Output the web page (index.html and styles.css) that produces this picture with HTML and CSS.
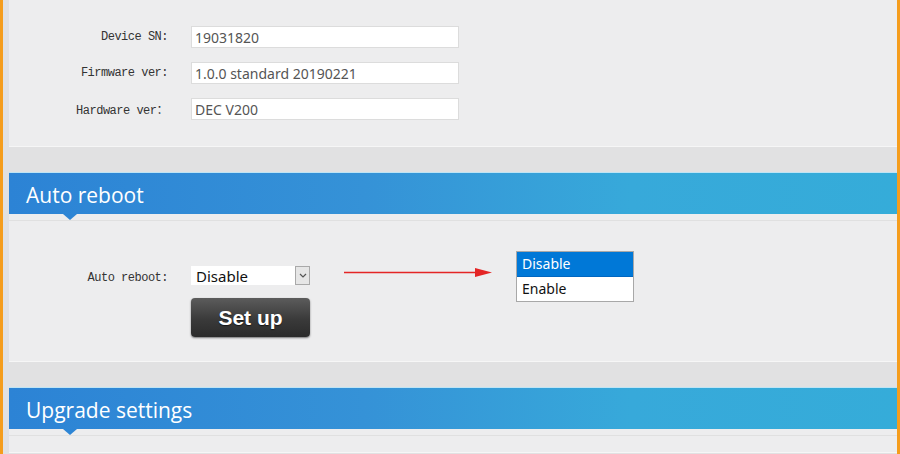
FILE: index.html
```html
<!DOCTYPE html>
<html lang="en">
<head>
  <meta charset="UTF-8" />
  <meta name="viewport" content="width=device-width, initial-scale=1.0"/>
  <title>System Settings</title>
  <link rel="stylesheet" href="styles.css">
</head>
<body>

  <div class="page">

    <div class="panel info">
      <div class="row">
        <label>Device SN:</label>
        <div class="field">19031820</div>
      </div>
      <div class="row">
        <label>Firmware ver:</label>
        <div class="field">1.0.0 standard 20190221</div>
      </div>
      <div class="row">
        <label>Hardware ver：</label>
        <div class="field">DEC V200</div>
      </div>
    </div>

    <div class="section">
      <div class="section-title"><h2>Auto reboot</h2></div>
      <div class="section-body reboot">
        <div class="row">
          <label>Auto reboot:</label>
          <div class="select">
            <span>Disable</span>
            <div class="select-btn">
              <svg width="8" height="5" viewBox="0 0 8 5"><path d="M1 1 L4 4 L7 1" fill="none" stroke="#555" stroke-width="1.2"/></svg>
            </div>
          </div>
        </div>
        <div class="row">
          <label></label>
          <button class="btn-setup">Set up</button>
        </div>

        <svg class="hint-arrow" width="150" height="11" viewBox="0 0 150 11">
          <line x1="0" y1="5.5" x2="134" y2="5.5" stroke="#e42525" stroke-width="1.6"/>
          <polygon points="131,1 148,5.5 131,10" fill="#e42525"/>
        </svg>

        <ul class="dropdown">
          <li class="active">Disable</li>
          <li>Enable</li>
        </ul>
      </div>
    </div>

    <div class="section">
      <div class="section-title"><h2>Upgrade settings</h2></div>
      <div class="section-body upgrade"></div>
    </div>

  </div>

</body>
</html>
```

FILE: styles.css
```css
body {
  margin: 0;
  background: #e1e1e2;
  border-left: 3px solid #f59d1c;
  border-right: 3px solid #f59d1c;
  height: 454px;
  overflow: hidden;
  color: #333;
}
.page {
  padding-left: 6px;
}
.panel, .section {
  background-color: #ededee;
  border-bottom: 1px solid #f6f6f6;
}
.info {
  padding: 26px 0 26px;
  display: flex;
  flex-direction: column;
  gap: 14px;
}
.row {
  display: grid;
  grid-template-columns: 159px 268px;
  column-gap: 23px;
  align-items: center;
}
.row label {
  text-align: right;
  font-family: "Liberation Mono", "Noto Sans CJK SC", monospace;
  font-size: 12px;
  letter-spacing: -0.5px;
  color: #333;
}
.field {
  height: 22px;
  box-sizing: border-box;
  background: white;
  border: 1px solid #dcdcdc;
  padding-left: 3px;
  font-family: "Noto Sans", sans-serif;
  font-size: 14px;
  line-height: 21px;
  color: #555;
}
.section {
  margin-top: 25px;
}
.section-title {
  position: relative;
  height: 41px;
  border-top: 1px solid #bfe4f4;
  background: linear-gradient(to right, #2c83d5, #3592d7 40%, #37a9da 70%, #35acd9);
}
.section-title::after {
  content: "";
  position: absolute;
  left: 54px;
  bottom: -6px;
  border-left: 7px solid transparent;
  border-right: 7px solid transparent;
  border-top: 6px solid #2d85d5;
}
.section-title h2 {
  margin: 0;
  padding: 2px 0 0 17px;
  font-family: "Open Sans", "Noto Sans", sans-serif;
  font-weight: normal;
  font-size: 21px;
  line-height: 40px;
  color: white;
}
.section-body {
  margin-top: 6px;
  border-top: 1px solid #e0e0e0;
}
.reboot {
  position: relative;
  padding: 45px 0 24px;
  display: flex;
  flex-direction: column;
  gap: 13px;
}
.reboot .row label {
  padding-top: 5px;
}
.select {
  width: 119px;
  height: 19px;
  box-sizing: border-box;
  background: white;
  display: flex;
  justify-content: space-between;
  font-family: "Noto Sans", sans-serif;
  font-size: 15px;
  line-height: 21px;
  color: #111;
}
.select span {
  padding-left: 5px;
}
.select-btn {
  width: 15px;
  height: 19px;
  box-sizing: border-box;
  background: #e6e6e6;
  border: 1px solid #a9a9a9;
  display: flex;
  align-items: center;
  justify-content: center;
}
.btn-setup {
  width: 119px;
  height: 39px;
  border: none;
  border-radius: 4px;
  background: linear-gradient(#5c5c5c, #3a3a3a 55%, #2b2b2b);
  box-shadow: 0 1px 2px rgba(0,0,0,0.5);
  color: white;
  font-family: "Liberation Sans", Arial, sans-serif;
  font-weight: bold;
  font-size: 21px;
  text-shadow: 0 1px 1px rgba(0,0,0,0.6);
  padding: 0;
}
.hint-arrow {
  position: absolute;
  left: 335px;
  top: 46px;
}
.dropdown {
  position: absolute;
  left: 507px;
  top: 30px;
  width: 118px;
  margin: 0;
  padding: 0;
  list-style: none;
  background: white;
  border: 1px solid #a8a8a8;
  box-sizing: border-box;
  font-family: "Noto Sans", sans-serif;
  font-size: 14px;
  color: #111;
}
.dropdown li {
  height: 24px;
  line-height: 24px;
  padding-left: 5px;
}
.dropdown li.active {
  background: #0078d7;
  color: white;
  border-bottom: 1px solid #0066c0;
}
.upgrade {
  height: 16px;
}
```
